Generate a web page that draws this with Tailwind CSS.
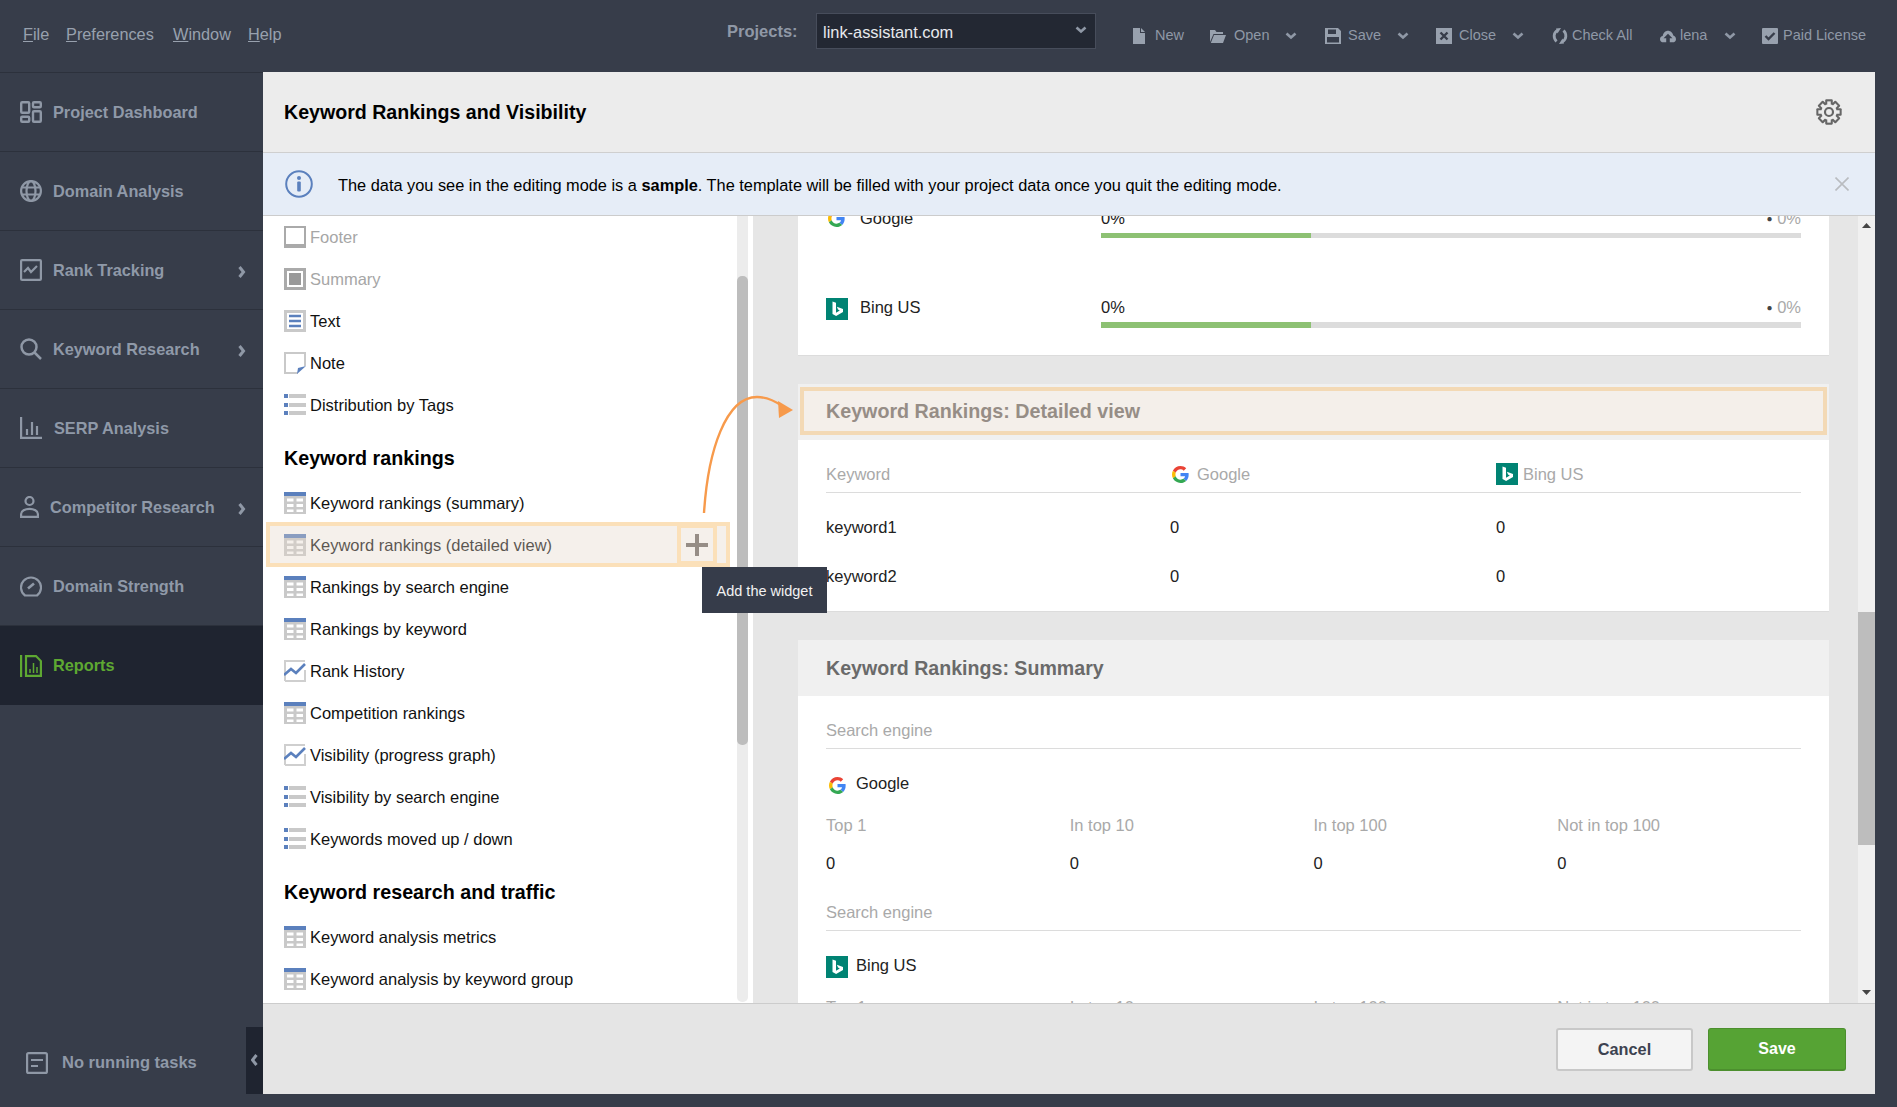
<!DOCTYPE html>
<html lang="en">
<head>
<meta charset="utf-8">
<title>Keyword Rankings and Visibility</title>
<script src="https://cdn.jsdelivr.net/npm/@tailwindcss/browser@4"></script>
</head>
<body class="m-0">
<svg class="hidden" xmlns="http://www.w3.org/2000/svg">
  <symbol id="tbl" viewBox="0 0 22 22"><rect width="22" height="4" fill="#5b80bd"/><rect y="4" width="22" height="18" fill="#c9c9c9"/><path d="M3 6.500h6.500v3H3zM12.500 6.500H19v3h-6.500zM3 12h6.500v3H3zM12.500 12H19v3h-6.500zM3 17.500h6.500V20H3zM12.500 17.500H19V20h-6.500z" fill="#fff"/></symbol>
  <symbol id="lst" viewBox="0 0 22 22"><path d="M0 0h4v4H0zM0 9h4v4H0zM0 17h4v4H0z" fill="#5b80bd"/><path d="M5 0h17v4H5zM5 9h17v4H5zM5 17h17v4H5z" fill="#c9c9c9"/></symbol>
  <symbol id="chrt" viewBox="0 0 22 22"><path d="M1 21V1h20M1 21h20V10" fill="none" stroke="#cfcfcf" stroke-width="2"/><path d="M0 15l7-6 5 4 9-9" fill="none" stroke="#5b80bd" stroke-width="2.600"/></symbol>
  <symbol id="ggl" viewBox="0 0 48 48"><path fill="#EA4335" d="M24 9.500c3.500 0 6.700 1.200 9.200 3.600l6.900-6.900C35.900 2.400 30.500 0 24 0 14.600 0 6.500 5.400 2.600 13.200l8 6.200C12.500 13.600 17.800 9.500 24 9.500z"/><path fill="#4285F4" d="M47 24.500c0-1.600-.1-3.100-.4-4.500H24v9h12.900c-.6 3-2.200 5.500-4.700 7.200l7.700 6C44.400 38.100 47 31.900 47 24.500z"/><path fill="#FBBC05" d="M10.500 28.600c-.5-1.400-.8-3-.8-4.600s.3-3.200.8-4.600l-8-6.200C.9 16.500 0 20.100 0 24s.9 7.500 2.600 10.800l7.900-6.200z"/><path fill="#34A853" d="M24 48c6.500 0 11.900-2.100 15.900-5.800l-7.700-6c-2.200 1.400-4.900 2.300-8.200 2.300-6.200 0-11.500-4.200-13.400-9.900l-8 6.200C6.500 42.600 14.600 48 24 48z"/></symbol>
  <symbol id="bng" viewBox="0 0 22 22"><rect width="22" height="22" fill="#008373"/><path d="M6.500 3.500l3.500 1.200v10l3.800-2.200-1.800-.9-1.100-2.800 6.100 2.100v3.200l-6.900 4-3.600-2z" fill="#fff"/></symbol>
  <symbol id="chev" viewBox="0 0 12 8"><path d="M1.500 1.500L6 5.500l4.500-4" fill="none" stroke="#8f98a6" stroke-width="2.600"/></symbol>
  <symbol id="side" viewBox="0 0 8 12"><path d="M1.500 1l4 5-4 5" fill="none" stroke="#8f98a6" stroke-width="3"/></symbol>
</svg>

<div class="relative w-[1897px] h-[1107px] overflow-hidden bg-[#373d4a] font-['Liberation_Sans',sans-serif] flex flex-col">

  <!-- top bar -->
  <header class="flex h-[72px] items-center shrink-0 text-[#8f98a6]">
    <nav class="w-[727px] flex pl-[23px] text-[16.3px] text-[#98a1ae] -mt-[4px]">
      <span class="w-[43px]"><u>F</u>ile</span>
      <span class="w-[107px]"><u>P</u>references</span>
      <span class="w-[75px]"><u>W</u>indow</span>
      <span><u>H</u>elp</span>
    </nav>
    <span class="w-[89px] font-bold text-[16.5px] -mt-[9px]">Projects:</span>
    <div class="w-[280px] h-[36px] -mt-[10px] bg-[#232833] border border-[#474d5b] flex items-center justify-between pl-[6px] pr-[8px] text-[16.4px] text-[#e8eaee]">
      <span class="pt-[3px]">link-assistant.com</span>
      <svg class="w-[12px] h-[8px] -mt-[3px]"><use href="#chev"/></svg>
    </div>
    <div class="w-[37px]"></div>
    <div class="w-[77px] flex items-center text-[14.5px]">
      <svg class="w-[12px] h-[16px]" viewBox="0 0 12 16"><path d="M0 0h7v5h5v11H0zM8 0l4 4H8z" fill="#98a1ae"/></svg>
      <span class="ml-[10px]">New</span>
    </div>
    <div class="w-[115px] flex items-center text-[14.5px]">
      <svg class="w-[16px] h-[16px]" viewBox="0 0 16 16"><path d="M0 2h5l1.500 2H13v2H3.500L0 14zM4 7h12l-3 8H0.800z" fill="#98a1ae"/></svg>
      <span class="ml-[8px]">Open</span>
      <svg class="w-[12px] h-[8px] ml-[16px]"><use href="#chev"/></svg>
    </div>
    <div class="w-[111px] flex items-center text-[14.5px]">
      <svg class="w-[16px] h-[16px]" viewBox="0 0 16 16"><path fill-rule="evenodd" d="M0 0h13l3 3v13H0zM3 1.500V6h8V1.500zM2 9v5.500h12V9z" fill="#98a1ae"/></svg>
      <span class="ml-[7px]">Save</span>
      <svg class="w-[12px] h-[8px] ml-[16px]"><use href="#chev"/></svg>
    </div>
    <div class="w-[116px] flex items-center text-[14.5px]">
      <svg class="w-[16px] h-[16px]" viewBox="0 0 16 16"><rect width="16" height="16" fill="#98a1ae"/><path d="M4.500 4.500l7 7m0-7l-7 7" stroke="#373d4a" stroke-width="2.400"/></svg>
      <span class="ml-[7px]">Close</span>
      <svg class="w-[12px] h-[8px] ml-[16px]"><use href="#chev"/></svg>
    </div>
    <div class="w-[108px] flex items-center text-[14.5px]">
      <svg class="w-[16px] h-[16px]" viewBox="0 0 16 16"><path d="M5.500 2.500C1.500 4.500 1 10 4.500 13.500M10.500 13.500C14.500 11.500 15 6 11.500 2.500" fill="none" stroke="#98a1ae" stroke-width="2.800"/><path d="M9 0L4 0.500l1.500 5zM7 16l5-.5-1.500-5z" fill="#98a1ae"/></svg>
      <span class="ml-[4px]">Check All</span>
    </div>
    <div class="w-[102px] flex items-center text-[14.5px]">
      <svg class="w-[16px] h-[13px]" viewBox="0 0 18 14"><path d="M4 13.500C1.500 13.500 0 12 0 10s1.500-3.500 3-3.500C3.500 3 6 .5 9 .5s5.500 2.500 6 5.500c1.500.3 3 2 3 4s-1.500 3.500-4 3.500h-3V9h3L9 4 4 9h3v4.500z" fill="#98a1ae"/></svg>
      <span class="ml-[4px]">lena</span>
      <svg class="w-[12px] h-[8px] ml-[17px]"><use href="#chev"/></svg>
    </div>
    <div class="flex items-center text-[14.5px]">
      <svg class="w-[16px] h-[16px]" viewBox="0 0 16 16"><rect width="16" height="16" rx="1" fill="#98a1ae"/><path d="M3.500 8l3 3 6-6" fill="none" stroke="#373d4a" stroke-width="2.400"/></svg>
      <span class="ml-[5px]">Paid License</span>
    </div>
  </header>

  <div class="flex flex-1 min-h-0">
    <!-- sidebar -->
    <aside class="relative w-[263px] shrink-0 flex flex-col text-[16.3px] font-bold text-[#8f99a8] border-t border-[#2c313c]">
      <a class="h-[79px] flex items-center pl-[20px] border-b border-[#2c313c]">
        <svg class="w-[22px] h-[22px] mr-[11px]" viewBox="0 0 22 22" fill="none" stroke="#8f98a6" stroke-width="2.400"><rect x="1.200" y="1.200" width="8" height="10.500" rx="1"/><rect x="13" y="1.200" width="7.800" height="5" rx="1"/><rect x="1.200" y="15.800" width="8" height="5" rx="1"/><rect x="13" y="10.300" width="7.800" height="10.500" rx="1"/></svg>
        Project Dashboard
      </a>
      <a class="h-[79px] flex items-center pl-[20px] border-b border-[#2c313c]">
        <svg class="w-[22px] h-[22px] mr-[11px]" viewBox="0 0 22 22" fill="none" stroke="#8f98a6" stroke-width="2.200"><circle cx="11" cy="11" r="9.900"/><ellipse cx="11" cy="11" rx="4.500" ry="9.900"/><path d="M1.500 7.500h19M1.500 14.500h19"/></svg>
        Domain Analysis
      </a>
      <a class="h-[79px] flex items-center pl-[20px] pr-[17px] border-b border-[#2c313c]">
        <svg class="w-[22px] h-[22px] mr-[11px]" viewBox="0 0 22 22" fill="none" stroke="#8f98a6" stroke-width="2.200"><rect x="1.100" y="1.100" width="19.800" height="19.800" rx="1"/><path d="M4 13l4-4 3 4 6-6"/></svg>
        Rank Tracking
        <svg class="w-[8px] h-[12px] ml-auto mt-[3px]"><use href="#side"/></svg>
      </a>
      <a class="h-[79px] flex items-center pl-[20px] pr-[17px] border-b border-[#2c313c]">
        <svg class="w-[22px] h-[22px] mr-[11px]" viewBox="0 0 22 22" fill="none" stroke="#8f98a6" stroke-width="2.500"><circle cx="9" cy="9" r="7.500"/><path d="M14.500 14.500L21 21"/></svg>
        Keyword Research
        <svg class="w-[8px] h-[12px] ml-auto mt-[3px]"><use href="#side"/></svg>
      </a>
      <a class="h-[79px] flex items-center pl-[20px] border-b border-[#2c313c]">
        <svg class="w-[22px] h-[22px] mr-[12px]" viewBox="0 0 22 22" fill="none" stroke="#8f98a6" stroke-width="2.200"><path d="M1.100 0v20.900H22M7 18v-6M12 18V5M17 18v-9"/></svg>
        SERP Analysis
      </a>
      <a class="h-[79px] flex items-center pl-[20px] pr-[17px] border-b border-[#2c313c]">
        <svg class="w-[19px] h-[22px] mr-[11px]" viewBox="0 0 19 22" fill="none" stroke="#8f98a6" stroke-width="2.200"><circle cx="9.500" cy="5" r="4"/><path d="M1.100 20.900v-3c0-3 4-5 8.400-5s8.400 2 8.400 5v3z"/></svg>
        Competitor Research
        <svg class="w-[8px] h-[12px] ml-auto mt-[3px]"><use href="#side"/></svg>
      </a>
      <a class="h-[79px] flex items-center pl-[20px] border-b border-[#2c313c]">
        <svg class="w-[22px] h-[22px] mr-[11px]" viewBox="0 0 22 22" fill="none" stroke="#8f98a6" stroke-width="2.200"><path d="M5 20.500a10 10 0 1 1 12 0z"/><path d="M8 13.500l6-5" stroke-width="2.600"/></svg>
        Domain Strength
      </a>
      <a class="h-[79px] flex items-center pl-[20px] bg-[#1f2430] text-[#5ea832]">
        <svg class="w-[22px] h-[22px] mr-[11px]" viewBox="0 0 22 22" fill="none" stroke="#5ea832" stroke-width="2.200"><path d="M1.100 0v22"/><path d="M6 1.100h10l4.900 5v14.800H6z"/><path d="M10 18v-4M13.500 18V8M17 18v-6" stroke-width="1.500"/></svg>
        Reports
      </a>
      <div class="mt-auto flex items-center pl-[26px] pb-[32px] text-[16.5px]">
        <svg class="w-[22px] h-[22px] mr-[14px]" viewBox="0 0 22 22" fill="none" stroke="#8f98a6" stroke-width="2.200"><rect x="1.100" y="1.100" width="19.800" height="19.800" rx="1.500"/><path d="M5 8h12M5 14h7"/></svg>
        No running tasks
      </div>
      <div class="absolute right-0 bottom-[13px] w-[17px] h-[67px] bg-[#1f2430] flex items-center justify-center">
        <svg class="w-[7px] h-[12px] -mt-[2px]" viewBox="0 0 7 12"><path d="M5.500 1l-4 5 4 5" fill="none" stroke="#8f98a6" stroke-width="3"/></svg>
      </div>
    </aside>

    <!-- main -->
    <main class="w-[1612px] h-[1022px] shrink-0 flex flex-col bg-white">
      <div class="h-[81px] shrink-0 bg-[#ececec] border-b border-[#cfcfcf] flex items-center justify-between pl-[21px] pr-[33px]">
        <h1 class="text-[19.6px] font-bold text-black pt-[2px]">Keyword Rankings and Visibility</h1>
        <svg class="w-[26px] h-[26px]" viewBox="0 0 24 24">
          <g fill="#666"><rect x="8.500" y="0.300" width="7" height="23.400" rx="1"/><rect x="8.500" y="0.300" width="7" height="23.400" rx="1" transform="rotate(45 12 12)"/><rect x="8.500" y="0.300" width="7" height="23.400" rx="1" transform="rotate(90 12 12)"/><rect x="8.500" y="0.300" width="7" height="23.400" rx="1" transform="rotate(135 12 12)"/><circle cx="12" cy="12" r="9"/></g>
          <g fill="#ececec"><rect x="10.400" y="2.200" width="3.200" height="19.600"/><rect x="10.400" y="2.200" width="3.200" height="19.600" transform="rotate(45 12 12)"/><rect x="10.400" y="2.200" width="3.200" height="19.600" transform="rotate(90 12 12)"/><rect x="10.400" y="2.200" width="3.200" height="19.600" transform="rotate(135 12 12)"/><circle cx="12" cy="12" r="7.100"/></g>
          <circle cx="12" cy="12" r="3.700" fill="none" stroke="#666" stroke-width="2"/>
        </svg>
      </div>
      <div class="h-[63px] shrink-0 bg-[#e6edf7] border-b border-[#cccccc] flex items-center pl-[22px] pr-[26px] text-[16.35px] text-black">
        <svg class="w-[28px] h-[28px] mr-[25px] shrink-0" viewBox="0 0 28 28" fill="none"><circle cx="14" cy="14" r="12.800" stroke="#5b80bd" stroke-width="2"/><circle cx="14" cy="8" r="2" fill="#5b80bd"/><rect x="12.200" y="11.500" width="3.600" height="10" rx="1" fill="#5b80bd"/></svg>
        <p class="mt-[2px]">The data you see in the editing mode is a <b>sample</b>. The template will be filled with your project data once you quit the editing mode.</p>
        <svg class="w-[14px] h-[14px] ml-auto" viewBox="0 0 14 14"><path d="M0.500 0.500l13 13m0-13l-13 13" stroke="#b9bcc0" stroke-width="1.600"/></svg>
      </div>

      <div class="flex h-[787px] shrink-0 overflow-hidden">
        <!-- widget list -->
        <div class="w-[474px] shrink-0 -mt-px pl-[21px] text-[16.5px] text-[#111]">
          <div class="flex h-[42px] items-center pt-[2px] text-[#a6a6a6]"><svg class="w-[22px] h-[22px] mr-[4px] -mt-[1px]" viewBox="0 0 22 22"><path d="M1 18V1h20v17" fill="none" stroke="#aaa" stroke-width="2"/><rect y="18" width="22" height="4" fill="#aaa"/></svg>Footer</div>
          <div class="flex h-[42px] items-center pt-[2px] text-[#a6a6a6]"><svg class="w-[22px] h-[22px] mr-[4px] -mt-[1px]" viewBox="0 0 22 22"><rect x="1.500" y="1.500" width="19" height="19" fill="#fff" stroke="#aaa" stroke-width="3"/><rect x="5" y="5" width="12" height="12" fill="#999"/></svg>Summary</div>
          <div class="flex h-[42px] items-center pt-[2px]"><svg class="w-[22px] h-[22px] mr-[4px] -mt-[1px]" viewBox="0 0 22 22"><rect x="1.500" y="1.500" width="19" height="19" fill="#fff" stroke="#c9c9c9" stroke-width="3"/><path d="M5 6h12M5 11h12M5 16h12" stroke="#5b80bd" stroke-width="2.600"/></svg>Text</div>
          <div class="flex h-[42px] items-center pt-[2px]"><svg class="w-[22px] h-[22px] mr-[4px] -mt-[1px]" viewBox="0 0 22 22"><path d="M14 21H1V1h20v13" fill="none" stroke="#c9c9c9" stroke-width="2"/><path d="M22 14l-8 2-1 6z" fill="#5b80bd"/></svg>Note</div>
          <div class="flex h-[42px] items-center pt-[2px]"><svg class="w-[22px] h-[22px] mr-[4px] -mt-[1px]"><use href="#lst"/></svg>Distribution by Tags</div>
          <h2 class="h-[56px] pt-[11px] flex items-center text-[19.7px] font-bold text-black">Keyword rankings</h2>
          <div class="flex h-[42px] items-center pt-[2px]"><svg class="w-[22px] h-[22px] mr-[4px] -mt-[1px]"><use href="#tbl"/></svg>Keyword rankings (summary)</div>
          <div class="relative flex h-[42px] items-center pt-[2px]">
            <svg class="w-[22px] h-[22px] mr-[4px] -mt-[1px]"><use href="#tbl"/></svg>Keyword rankings (detailed view)
            <div class="absolute left-[-18px] top-[-1px] w-[464px] h-[45px] bg-[#e2d3c5]/35 border-4 border-[#fbe0b9]"></div>
            <div class="absolute left-[393px] top-[1px] w-[40px] h-[41px] border-4 border-[#fbe0b9] flex items-center justify-center">
              <svg class="w-[22px] h-[22px]" viewBox="0 0 22 22"><path d="M11 0v22M0 11h22" stroke="#968d86" stroke-width="4"/></svg>
            </div>
          </div>
          <div class="flex h-[42px] items-center pt-[2px]"><svg class="w-[22px] h-[22px] mr-[4px] -mt-[1px]"><use href="#tbl"/></svg>Rankings by search engine</div>
          <div class="flex h-[42px] items-center pt-[2px]"><svg class="w-[22px] h-[22px] mr-[4px] -mt-[1px]"><use href="#tbl"/></svg>Rankings by keyword</div>
          <div class="flex h-[42px] items-center pt-[2px]"><svg class="w-[22px] h-[22px] mr-[4px] -mt-[1px]"><use href="#chrt"/></svg>Rank History</div>
          <div class="flex h-[42px] items-center pt-[2px]"><svg class="w-[22px] h-[22px] mr-[4px] -mt-[1px]"><use href="#tbl"/></svg>Competition rankings</div>
          <div class="flex h-[42px] items-center pt-[2px]"><svg class="w-[22px] h-[22px] mr-[4px] -mt-[1px]"><use href="#chrt"/></svg>Visibility (progress graph)</div>
          <div class="flex h-[42px] items-center pt-[2px]"><svg class="w-[22px] h-[22px] mr-[4px] -mt-[1px]"><use href="#lst"/></svg>Visibility by search engine</div>
          <div class="flex h-[42px] items-center pt-[2px]"><svg class="w-[22px] h-[22px] mr-[4px] -mt-[1px]"><use href="#lst"/></svg>Keywords moved up / down</div>
          <h2 class="h-[56px] pt-[11px] flex items-center text-[19.7px] font-bold text-black">Keyword research and traffic</h2>
          <div class="flex h-[42px] items-center pt-[2px]"><svg class="w-[22px] h-[22px] mr-[4px] -mt-[1px]"><use href="#tbl"/></svg>Keyword analysis metrics</div>
          <div class="flex h-[42px] items-center pt-[2px]"><svg class="w-[22px] h-[22px] mr-[4px] -mt-[1px]"><use href="#tbl"/></svg>Keyword analysis by keyword group</div>
        </div>
        <!-- list scrollbar -->
        <div class="w-[11px] h-[786px] shrink-0 bg-[#ececec] rounded-b-[5px] pt-[60px]">
          <div class="h-[469px] bg-[#bdbdbd] rounded-[5px]"></div>
        </div>
        <div class="w-[5px] shrink-0"></div>

        <!-- preview -->
        <div class="w-[1105px] shrink-0 bg-[#e6e6e6] pl-[45px] pr-[29px] text-[16.5px] text-[#222] overflow-hidden">
          <section class="-mt-[8px] bg-white px-[28px] border-b border-[#dcdcdc] h-[148px]">
            <div class="flex h-[89px]">
              <div class="w-[275px] flex items-start h-[20px]">
                <svg class="w-[17px] h-[17px] ml-[2px] mr-[15px] mt-[2px]"><use href="#ggl"/></svg><span class="leading-[20px]">Google</span>
              </div>
              <div class="flex-1">
                <div class="flex justify-between h-[20px] leading-[20px]"><span>0%</span><span class="text-[#a9a9a9]"><span class="text-[#444] text-[10px] align-[2px]">●</span> 0%</span></div>
                <div class="mt-[5px] h-[5px] bg-[#dcdcdc]"><div class="w-[210px] h-full bg-[#8dc173]"></div></div>
              </div>
            </div>
            <div class="flex">
              <div class="w-[275px] flex items-start h-[20px]">
                <svg class="w-[22px] h-[22px] mr-[12px] mt-px shrink-0"><use href="#bng"/></svg><span class="leading-[20px]">Bing US</span>
              </div>
              <div class="flex-1">
                <div class="flex justify-between h-[20px] leading-[20px]"><span>0%</span><span class="text-[#a9a9a9]"><span class="text-[#444] text-[10px] align-[2px]">●</span> 0%</span></div>
                <div class="mt-[5px] h-[6px] bg-[#dcdcdc]"><div class="w-[210px] h-full bg-[#8dc173]"></div></div>
              </div>
            </div>
          </section>

          <section class="mt-[28px] bg-white pb-[10px] border-b border-[#dcdcdc]">
            <div class="h-[56px] bg-[#f0f0f0] pt-[3px] px-[2px]">
              <div class="h-[48px] bg-[#f4efea] border-4 border-[#f3d9b5] flex items-center pl-[22px] pt-[2px] text-[19.7px] font-bold text-[#968d86]">Keyword Rankings: Detailed view</div>
            </div>
            <div class="mx-[28px] h-[53px] border-b border-[#dcdcdc] pb-[8px] flex items-end text-[#a9a9a9] leading-[20px]">
              <div class="w-[344px]">Keyword</div>
              <div class="w-[326px] h-[20px] flex items-center"><svg class="w-[17px] h-[17px] ml-[2px] mr-[8px]"><use href="#ggl"/></svg>Google</div>
              <div class="h-[20px] flex items-center"><svg class="w-[22px] h-[22px] mr-[5px]"><use href="#bng"/></svg>Bing US</div>
            </div>
            <div class="mx-[28px] mt-[10px] flex h-[49px] items-center"><div class="w-[344px]">keyword1</div><div class="w-[326px]">0</div><div>0</div></div>
            <div class="mx-[28px] flex h-[49px] items-center"><div class="w-[344px]">keyword2</div><div class="w-[326px]">0</div><div>0</div></div>
          </section>

          <section class="mt-[28px] bg-white">
            <div class="h-[56px] bg-[#f0f0f0] flex items-center pl-[28px] pt-[2px] text-[19.6px] font-bold text-[#6a6a6a]">Keyword Rankings: Summary</div>
            <div class="mx-[28px]">
              <div class="h-[53px] border-b border-[#dcdcdc] pb-[8px] flex items-end text-[#a9a9a9] leading-[20px]">Search engine</div>
              <div class="mt-[8px] h-[56px] flex items-center"><svg class="w-[17px] h-[17px] ml-[3px] mr-[10px]"><use href="#ggl"/></svg><span class="-mt-[3px]">Google</span></div>
              <div class="grid grid-cols-4 h-[24px] items-center text-[#a9a9a9]"><span>Top 1</span><span>In top 10</span><span>In top 100</span><span>Not in top 100</span></div>
              <div class="grid grid-cols-4 h-[52px] items-center"><span>0</span><span>0</span><span>0</span><span>0</span></div>
              <div class="h-[42px] border-b border-[#dcdcdc] pb-[8px] flex items-end text-[#a9a9a9] leading-[20px]">Search engine</div>
              <div class="mt-[8px] h-[56px] flex items-center"><svg class="w-[22px] h-[22px] mr-[8px]"><use href="#bng"/></svg><span class="-mt-[3px]">Bing US</span></div>
              <div class="grid grid-cols-4 h-[24px] items-center text-[#a9a9a9]"><span>Top 1</span><span>In top 10</span><span>In top 100</span><span>Not in top 100</span></div>
            </div>
          </section>
        </div>

        <!-- preview scrollbar -->
        <div class="w-[17px] shrink-0 bg-[#f0f0f0]">
          <div class="flex flex-col h-full items-center pt-[7px]">
            <svg class="w-[9px] h-[5px]" viewBox="0 0 9 5"><path d="M4.500 0L9 5H0z" fill="#444"/></svg>
            <div class="w-full h-[233px] mt-[384px] bg-[#bdbdbd]"></div>
            <svg class="w-[9px] h-[5px] mt-auto mb-[8px]" viewBox="0 0 9 5"><path d="M4.500 5L9 0H0z" fill="#444"/></svg>
          </div>
        </div>
      </div>

      <div class="flex-1 bg-[#e5e5e5] border-t border-[#cccccc] flex items-center justify-end gap-[15px] pr-[29px]">
        <button class="w-[137px] h-[43px] pt-px rounded-[3px] bg-[#f4f4f4] border-2 border-[#c8c8c8] text-[16.3px] font-bold text-[#3c4250]">Cancel</button>
        <button class="w-[138px] h-[43px] pt-px rounded-[3px] bg-[#56a334] border border-[#4c8f2e] border-b-2 text-[16px] font-bold text-white">Save</button>
      </div>
    </main>
  </div>

  <!-- annotation arrow -->
  <svg class="absolute left-[690px] top-[385px] w-[110px] h-[135px] pointer-events-none" viewBox="690 385 110 135">
    <path d="M704 513C708 450 726 397 757 397C768 397 775 401 782 406" fill="none" stroke="#f79a4b" stroke-width="2.400"/>
    <path d="M793 410L778 401L779 418z" fill="#f79a4b"/>
  </svg>
  <!-- tooltip -->
  <div class="absolute left-[702px] top-[567px] w-[125px] h-[46px] pt-[3px] bg-[#363c4a] text-[#f2f2f2] text-[14.5px] flex items-center justify-center">Add the widget</div>
</div>
</body>
</html>
